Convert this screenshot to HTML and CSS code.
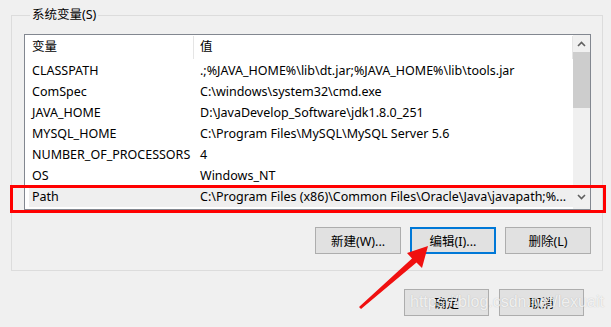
FILE: index.html
```html
<!DOCTYPE html>
<html>
<head>
  <meta charset="utf-8">
  <title>系统变量</title>
  <link rel="stylesheet" href="styles.css">
</head>
<body>
  <div class="window">
    <fieldset class="group">
      <legend>系统变量(S)</legend>
      <div class="listview">
        <div class="list">
          <div class="row head">
            <span class="c1">变量</span>
            <span class="c2">值</span>
          </div>
          <div class="row"><span class="c1">CLASSPATH</span><span class="c2">.;%JAVA_HOME%\lib\dt.jar;%JAVA_HOME%\lib\tools.jar</span></div>
          <div class="row"><span class="c1">ComSpec</span><span class="c2">C:\windows\system32\cmd.exe</span></div>
          <div class="row"><span class="c1">JAVA_HOME</span><span class="c2">D:\JavaDevelop_Software\jdk1.8.0_251</span></div>
          <div class="row"><span class="c1">MYSQL_HOME</span><span class="c2">C:\Program Files\MySQL\MySQL Server 5.6</span></div>
          <div class="row"><span class="c1">NUMBER_OF_PROCESSORS</span><span class="c2">4</span></div>
          <div class="row"><span class="c1">OS</span><span class="c2">Windows_NT</span></div>
          <div class="row sel"><span class="c1">Path</span><span class="c2">C:\Program Files (x86)\Common Files\Oracle\Java\javapath;%...</span></div>
        </div>
        <div class="vscroll">
          <div class="sbtn">
            <svg width="9" height="6" viewBox="0 0 9 6"><path d="M1 5 L4.5 1.5 L8 5" fill="none" stroke="#606060" stroke-width="1.6"/></svg>
          </div>
          <div class="thumb"></div>
          <div class="track"></div>
          <div class="sbtn">
            <svg width="9" height="6" viewBox="0 0 9 6"><path d="M1 1 L4.5 4.5 L8 1" fill="none" stroke="#606060" stroke-width="1.6"/></svg>
          </div>
        </div>
      </div>
      <div class="buttons">
        <button class="btn">新建(W)...</button>
        <button class="btn focus">编辑(I)...</button>
        <button class="btn">删除(L)</button>
      </div>
    </fieldset>
    <div class="buttons footer">
      <button class="btn">确定</button>
      <button class="btn">取消</button>
    </div>

    <!-- annotations drawn over the screenshot -->
    <div class="mark"></div>
    <svg class="arrow" width="611" height="327" viewBox="0 0 611 327">
      <polygon points="359,307 412,258.5 407,253 428,246 422,268 416.5,262.5 361,309" fill="#f01010"/>
    </svg>
    <div class="watermark">https://blog.csdn.net/lexuait</div>
  </div>
</body>
</html>
```

FILE: styles.css
```css
html, body {
    margin: 0;
    padding: 0;
    background: #f0f0f0;
}
body {
    font-family: "Noto Sans", "Noto Sans CJK SC", sans-serif;
    font-size: 12.5px;
    color: #000;
}
.window {
    position: relative;
    width: 611px;
    height: 327px;
    overflow: hidden;
    padding-top: 7px;
    box-sizing: border-box;
}

/* group box */
.group {
    margin: 0 0 0 11px;
    padding: 0 11px 16px 12px;
    width: 592px;
    box-sizing: border-box;
    border: 1px solid #dcdcdc;
    min-width: 0;
}
.group legend {
    margin-left: 6px;
    padding: 0 2px;
    line-height: 16px;
    font-size: 12.5px;
}

/* list view */
.listview {
    margin-top: 11px;
    height: 176px;
    box-sizing: border-box;
    border: 1px solid #828790;
    background: #fff;
    display: flex;
}
.list {
    flex: 1;
    min-width: 0;
}
.row {
    display: flex;
    height: 21px;
    line-height: 21px;
    white-space: nowrap;
}
.row.head {
    height: 25px;
    line-height: 24px;
}
.row .c1 {
    width: 168px;
    padding-left: 7px;
    box-sizing: border-box;
    flex: none;
    overflow: hidden;
}
.row .c2 {
    flex: 1;
    padding-left: 7px;
    min-width: 0;
    overflow: hidden;
}
.row.head .c2 {
    border-left: 1px solid #e5e5e5;
    border-right: 1px solid #e5e5e5;
    padding-left: 6px;
    margin-top: 1px;
    margin-bottom: 1px;
    line-height: 22px;
}
.row.sel {
    background: #efefef;
    margin-left: 4px;
}
.row.sel .c1 {
    width: 164px;
    padding-left: 3px;
}

/* scrollbar */
.vscroll {
    width: 17px;
    display: flex;
    flex-direction: column;
    background: #f0f0f0;
    flex: none;
    padding-bottom: 2px;
}
.sbtn {
    height: 17px;
    display: flex;
    align-items: center;
    justify-content: center;
}
.vscroll .sbtn:last-child {
    height: 20px;
}
.thumb {
    height: 56px;
    background: #cdcdcd;
}
.track {
    flex: 1;
}

/* buttons */
.buttons {
    display: flex;
    justify-content: flex-end;
    gap: 9px;
    margin-top: 17px;
}
.btn {
    width: 86px;
    height: 27px;
    margin: 0;
    padding: 0;
    border: 1px solid #adadad;
    background: #e1e1e1;
    font-family: "Noto Sans", "Noto Sans CJK SC", sans-serif;
    font-size: 12.5px;
    color: #000;
}
.btn.focus {
    border: 2px solid #0078d7;
}
.footer {
    margin-top: 18px;
    margin-right: 27px;
    gap: 10px;
}
.footer .btn {
    width: 85px;
}

/* annotations */
.mark {
    position: absolute;
    left: 10px;
    top: 185px;
    width: 596px;
    height: 28px;
    box-sizing: border-box;
    border: 3px solid #ff0000;
}
.arrow {
    position: absolute;
    left: 0;
    top: 0;
}
.watermark {
    position: absolute;
    left: 410px;
    top: 293px;
    font-family: "Liberation Sans", sans-serif;
    font-size: 16px;
    color: rgba(255, 255, 255, 0.8);
    text-shadow: 0 0 1px rgba(120, 120, 120, 0.45);
}
```
